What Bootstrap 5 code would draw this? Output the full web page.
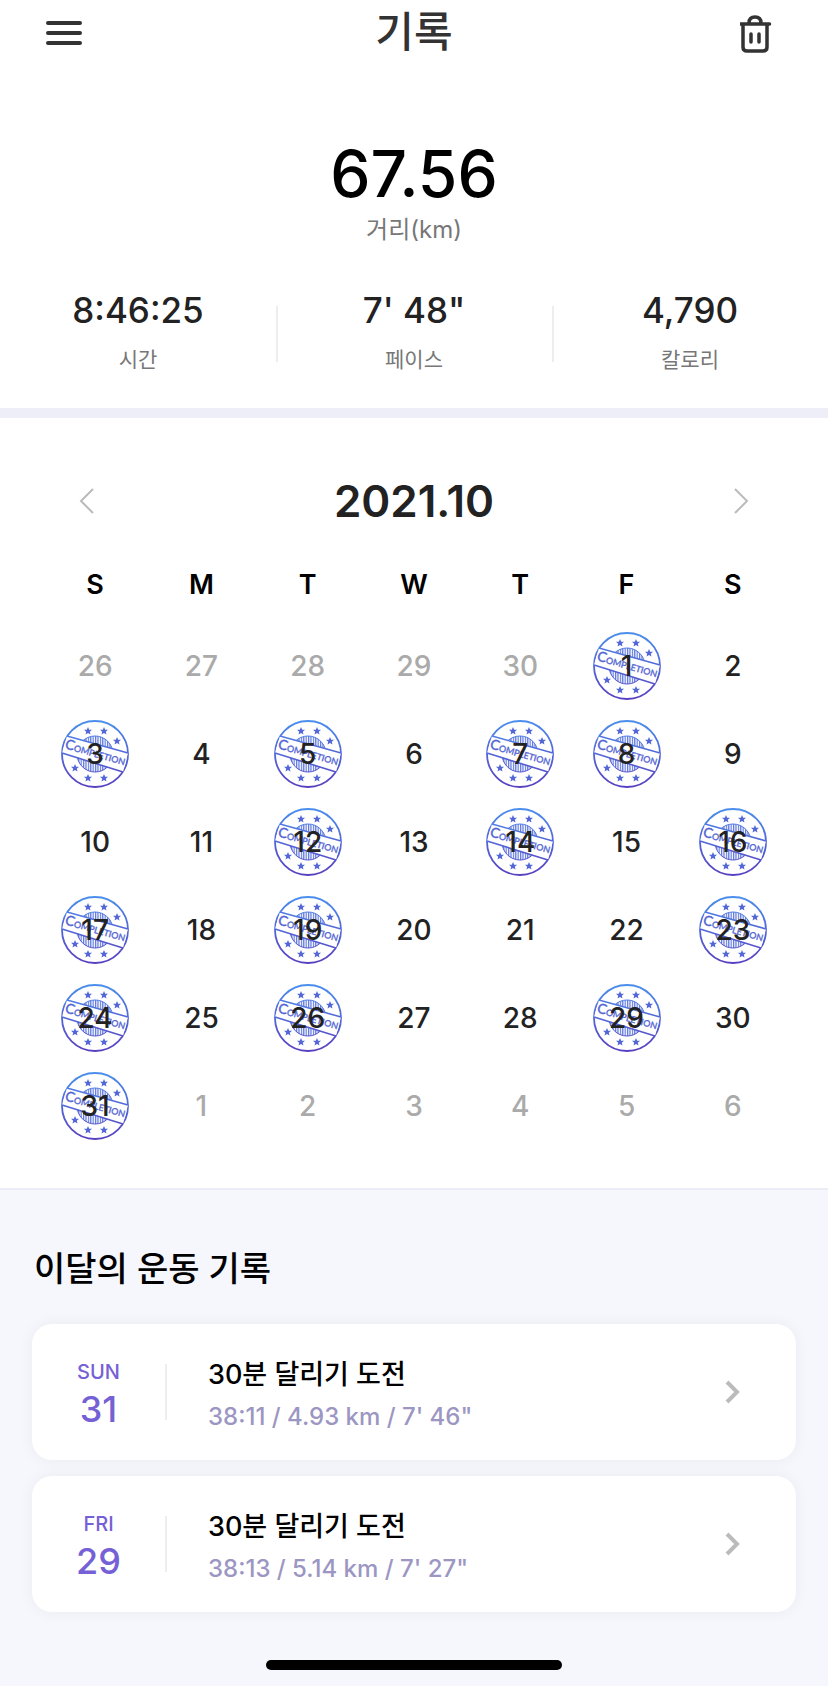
<!DOCTYPE html>
<html lang="ko">
<head>
<meta charset="utf-8">
<meta name="viewport" content="width=device-width, initial-scale=1">
<title>기록</title>
<link href="https://cdn.jsdelivr.net/npm/bootstrap@5.3.0/dist/css/bootstrap.min.css" rel="stylesheet">
<style>
body { font-family: Inter, "Noto Sans CJK KR", sans-serif; color: #222; background: #f6f7fc; min-height: 100vh; }
.icon-btn { display: flex; padding: 0; border: 0; background: none; }
.topbar { height: 76px; padding: 0 40px 12px; }
.page-title { font-size: 42px; line-height: 60px; font-weight: 500; color: #333; }
.total { padding-top: 60px; }
.total-num { font-size: 64px; line-height: 76px; font-weight: 500; color: #000; }
.total-label { font-size: 24px; line-height: 36px; color: #777; }
.stats { padding: 36px 0 24px; }
.stat-item { position: relative; }
.stat-item + .stat-item::before { content: ""; position: absolute; left: 0; top: 22px; width: 2px; height: 56px; background: #eee; }
.stat-num { font-size: 35px; line-height: 52px; font-weight: 500; }
.stat-label { font-size: 21px; line-height: 48px; color: #777; }
.band { height: 10px; background: #eeeef8; }
.calendar { padding: 52px 42px 38px; border-bottom: 2px solid #ececf6; }
.month-bar { padding: 0 35px; height: 62px; }
.month-name { font-size: 44px; line-height: 60px; font-weight: 600; }
.month-table { table-layout: fixed; width: 100%; margin-top: 16px; text-align: center; }
.month-table th { height: 74px; padding: 0; font-size: 27px; font-weight: 600; color: #000; }
.month-table td { height: 88px; padding: 0; font-size: 28px; font-weight: 500; }
.month-table .other { color: #aaa; }
.day-cell { position: relative; display: flex; align-items: center; justify-content: center; height: 88px; }
.day-cell svg { position: absolute; width: 70px; height: 70px; }
.day-cell span { position: relative; }
.records { padding: 55px 32px 48px; }
.records-title { font-size: 34px; line-height: 48px; font-weight: 500; color: #000; margin-bottom: 31px; padding-left: 2px; }
.record-card { height: 136px; border-radius: 20px; background: #fff; box-shadow: 0 0 16px rgba(40, 40, 80, .05); padding-right: 53px; color: #000; }
.record-date { width: 133px; padding-top: 8px; color: #7560d6; font-weight: 500; }
.record-dow { font-size: 20px; line-height: 26px; }
.record-day { font-size: 36px; line-height: 48px; }
.record-rule { width: 2px; height: 56px; background: #eee; margin-right: 41px; }
.record-text { padding-top: 8px; }
.record-name { font-size: 27px; line-height: 42px; font-weight: 500; }
.record-data { font-size: 24px; line-height: 42px; font-weight: 500; color: #9c96c2; }
.home-bar { width: 296px; height: 10px; border-radius: 5px; background: #000; }
</style>
</head>
<body>
<svg width="0" height="0" class="position-absolute" aria-hidden="true">
  <defs>
    <linearGradient id="ink" gradientUnits="userSpaceOnUse" x1="0" y1="-34" x2="0" y2="34"><stop offset="0" stop-color="#4b8fee"/><stop offset="1" stop-color="#5a3fc0"/></linearGradient>
    <pattern id="hatch" width="2.4" height="4" patternUnits="userSpaceOnUse"><rect width="1.2" height="4" fill="#5a74dc"/></pattern>
    <path id="star" d="M0-4 1.200-1.300 4-1.200 1.800.700 2.500 3.500 0 1.900-2.500 3.500-1.800.700-4-1.200-1.200-1.300z"/>
    <symbol id="stamp" viewBox="-35 -35 70 70">
      <circle r="33" fill="none" stroke="url(#ink)" stroke-width="1.8"/>
      <circle r="18" fill="url(#hatch)" stroke="url(#ink)" stroke-width="1"/>
      <path d="M-28-18 33-1 28 18-33-1z" fill="#fff"/>
      <path d="M-28-18 33-1M-33-1 28 18" stroke="url(#ink)" stroke-width="1.6"/>
      <g fill="url(#ink)"><use href="#star" x="-7" y="-23"/><use href="#star" x="9" y="-23"/><use href="#star" x="22" y="-13"/><use href="#star" x="-20" y="14"/><use href="#star" x="-7" y="24"/><use href="#star" x="9" y="24"/></g>
      <text transform="rotate(16)" y="3" text-anchor="middle" font-family="Lato, sans-serif" font-size="9" fill="#5567d4" stroke="#5567d4" stroke-width=".3"><tspan font-size="14">C</tspan>OMPLETION</text>
    </symbol>
  </defs>
</svg>
<div class="bg-white">
  <header class="topbar d-flex align-items-center justify-content-between">
    <button class="icon-btn" aria-label="메뉴"><svg width="48" height="40" viewBox="0 0 48 40" fill="none" stroke="#333" stroke-width="4" stroke-linecap="round"><path d="M8 11H40M8 21H40M8 31H40"/></svg></button>
    <h1 class="page-title m-0">기록</h1>
    <button class="icon-btn" aria-label="삭제"><svg width="48" height="44" viewBox="9 0 48 44" fill="none" stroke="#333" stroke-width="3.5" stroke-linecap="round" stroke-linejoin="round"><path d="M9.500 14H38.500M12 14V37Q12 41 16 41H32Q36 41 36 37V14M18 13Q18 7 24 7T30 13"/><path d="M20 24V32M28 24V32"/></svg></button>
  </header>
  <section class="total text-center">
    <div class="total-num">67.56</div>
    <div class="total-label">거리(km)</div>
    <div class="stats row g-0">
      <div class="col stat-item"><div class="stat-num">8:46:25</div><div class="stat-label">시간</div></div>
      <div class="col stat-item"><div class="stat-num">7' 48"</div><div class="stat-label">페이스</div></div>
      <div class="col stat-item"><div class="stat-num">4,790</div><div class="stat-label">칼로리</div></div>
    </div>
  </section>
  <div class="band"></div>
  <section class="calendar">
    <div class="month-bar d-flex align-items-center justify-content-between">
      <button class="icon-btn" aria-label="이전 달"><svg width="20" height="28" viewBox="0 0 20 28" fill="none" stroke="#bbb" stroke-width="2"><path d="M16 2 4 14 16 26"/></svg></button>
      <h2 class="month-name m-0">2021.10</h2>
      <button class="icon-btn" aria-label="다음 달"><svg width="20" height="28" viewBox="0 0 20 28" fill="none" stroke="#bbb" stroke-width="2"><path d="M4 2 16 14 4 26"/></svg></button>
    </div>
    <table class="month-table">
      <thead><tr><th>S</th><th>M</th><th>T</th><th>W</th><th>T</th><th>F</th><th>S</th></tr></thead>
      <tbody id="days"></tbody>
    </table>
  </section>
</div>
<section class="records">
  <h2 class="records-title">이달의 운동 기록</h2>
  <div class="d-flex flex-column gap-3">
    <a href="#" class="record-card d-flex align-items-center text-decoration-none">
      <div class="record-date text-center"><div class="record-dow">SUN</div><div class="record-day">31</div></div>
      <div class="record-rule"></div>
      <div class="record-text flex-grow-1"><div class="record-name">30분 달리기 도전</div><div class="record-data">38:11 / 4.93 km / 7' 46"</div></div>
      <svg width="20" height="28" viewBox="0 0 20 28" fill="none" stroke="#bbb" stroke-width="4"><path d="M4 4 14 14 4 24"/></svg>
    </a>
    <a href="#" class="record-card d-flex align-items-center text-decoration-none">
      <div class="record-date text-center"><div class="record-dow">FRI</div><div class="record-day">29</div></div>
      <div class="record-rule"></div>
      <div class="record-text flex-grow-1"><div class="record-name">30분 달리기 도전</div><div class="record-data">38:13 / 5.14 km / 7' 27"</div></div>
      <svg width="20" height="28" viewBox="0 0 20 28" fill="none" stroke="#bbb" stroke-width="4"><path d="M4 4 14 14 4 24"/></svg>
    </a>
  </div>
</section>
<div class="home-bar mx-auto mb-3"></div>
<script src="https://cdn.jsdelivr.net/npm/bootstrap@5.3.0/dist/js/bootstrap.bundle.min.js"></script>
<script>
const done = [1, 3, 5, 7, 8, 12, 14, 16, 17, 19, 23, 24, 26, 29, 31];
let rows = "";
for (let week = 0; week < 6; week++) {
  rows += "<tr>";
  for (let dow = 0; dow < 7; dow++) {
    const n = week * 7 + dow - 4;
    const inMonth = n >= 1 && n <= 31;
    const label = n < 1 ? n + 30 : n > 31 ? n - 31 : n;
    const mark = inMonth && done.includes(n) ? '<svg aria-hidden="true"><use href="#stamp"/></svg>' : "";
    rows += `<td class="${inMonth ? "" : "other"}"><div class="day-cell">${mark}<span>${label}</span></div></td>`;
  }
  rows += "</tr>";
}
document.getElementById("days").innerHTML = rows;
</script>
</body>
</html>
